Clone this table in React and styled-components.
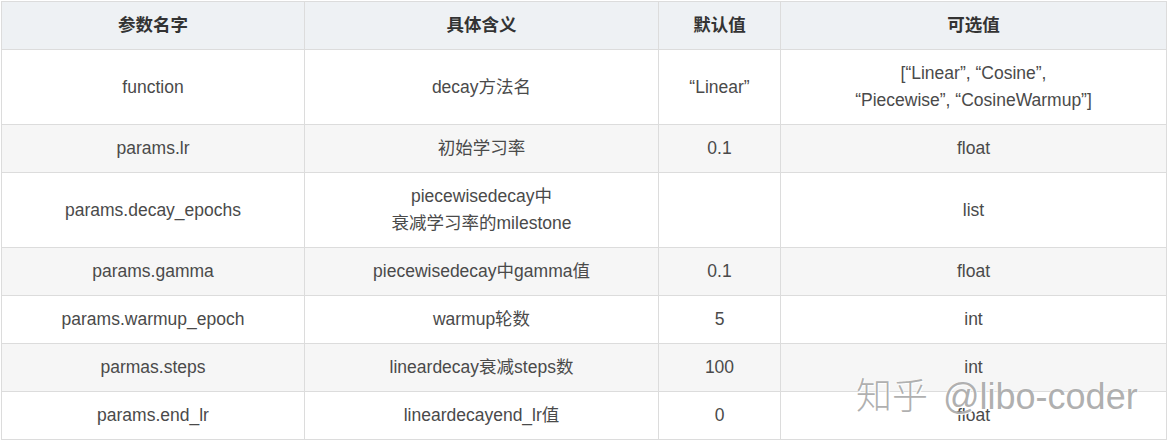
import React from 'react';
import styled, { createGlobalStyle } from 'styled-components';

const GlobalStyle = createGlobalStyle`
  html, body {
    margin: 0;
    padding: 0;
    background: #fff;
  }
  body {
    font-family: "Liberation Sans", Arial, "Noto Sans CJK SC", sans-serif;
  }
`;

const Page = styled.div`
  position: relative;
  width: 1168px;
  height: 440px;
  padding: 1px 0 0 1px;
  box-sizing: border-box;
  overflow: hidden;
`;

const Table = styled.table`
  width: 1165px;
  border-collapse: collapse;
  table-layout: fixed;
  font-size: 17.5px;
  color: #4a4a4a;
`;

const HeadCell = styled.th`
  background: #eef1f4;
  color: #333;
  font-weight: bold;
  font-family: "Liberation Sans", "Noto Sans CJK SC", sans-serif;
  border: 1px solid #dcdcdc;
  padding: 10px 12px;
  line-height: 27px;
  text-align: center;
`;

const Row = styled.tr`
  background: ${(p) => (p.$striped ? '#f6f6f6' : '#fff')};
`;

const Cell = styled.td`
  border: 1px solid #dcdcdc;
  padding: 10px 12px;
  line-height: 27px;
  text-align: center;
  vertical-align: middle;
`;

const Watermark = styled.div`
  position: absolute;
  left: 856px;
  top: 371px;
  display: flex;
  align-items: baseline;
  gap: 15px;
  font-family: "Liberation Sans", "Noto Sans CJK SC", sans-serif;
  font-size: 36px;
  line-height: 44px;
  color: rgba(155, 155, 155, 0.8);
  text-shadow: 1px 1px 0 rgba(255, 255, 255, 0.95), -1px 0 0 rgba(255, 255, 255, 0.6);
  white-space: nowrap;
  pointer-events: none;
`;

const WatermarkCjk = styled.span`
  font-family: "Noto Sans CJK SC", sans-serif;
  font-weight: 300;
`;

const columns = [
  { title: '参数名字', width: 303 },
  { title: '具体含义', width: 354 },
  { title: '默认值', width: 122 },
  { title: '可选值', width: 386 },
];

const rows = [
  ['function', 'decay方法名', '“Linear”', ['[“Linear”, “Cosine”,', '“Piecewise”, “CosineWarmup”]']],
  ['params.lr', '初始学习率', '0.1', 'float'],
  ['params.decay_epochs', ['piecewisedecay中', '衰减学习率的milestone'], '', 'list'],
  ['params.gamma', 'piecewisedecay中gamma值', '0.1', 'float'],
  ['params.warmup_epoch', 'warmup轮数', '5', 'int'],
  ['parmas.steps', 'lineardecay衰减steps数', '100', 'int'],
  ['params.end_lr', 'lineardecayend_lr值', '0', 'float'],
];

const renderValue = (v) =>
  Array.isArray(v)
    ? v.map((line, i) => (
        <React.Fragment key={i}>
          {i > 0 && <br />}
          {line}
        </React.Fragment>
      ))
    : v;

export default function App() {
  return (
    <>
      <GlobalStyle />
      <Page>
        <Table>
          <colgroup>
            {columns.map((c) => (
              <col key={c.title} style={{ width: c.width }} />
            ))}
          </colgroup>
          <thead>
            <tr>
              {columns.map((c) => (
                <HeadCell key={c.title}>{c.title}</HeadCell>
              ))}
            </tr>
          </thead>
          <tbody>
            {rows.map((r, i) => (
              <Row key={i} $striped={i % 2 === 1}>
                {r.map((v, j) => (
                  <Cell key={j}>{renderValue(v)}</Cell>
                ))}
              </Row>
            ))}
          </tbody>
        </Table>
        <Watermark>
          <WatermarkCjk>知乎</WatermarkCjk>
          <span>@libo-coder</span>
        </Watermark>
      </Page>
    </>
  );
}
